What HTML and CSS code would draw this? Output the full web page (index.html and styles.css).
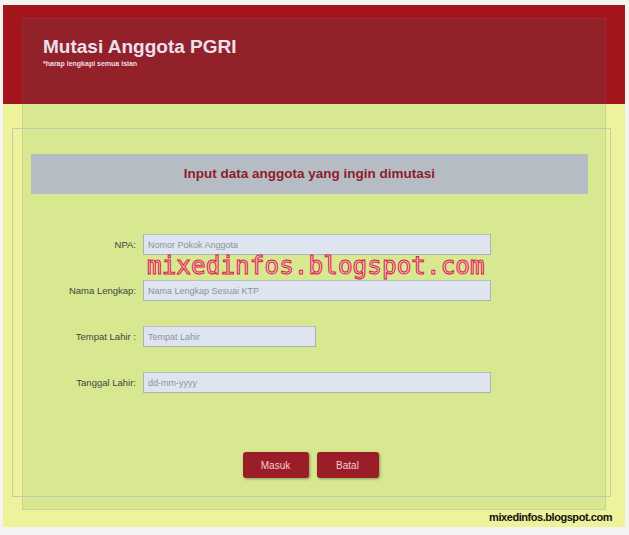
FILE: index.html
```html
<!DOCTYPE html>
<html lang="id">
<head>
  <meta charset="UTF-8">
  <meta name="viewport" content="width=device-width, initial-scale=1.0">
  <title>Mutasi Anggota PGRI</title>
  <link rel="stylesheet" href="styles.css">
</head>
<body>

<div class="frame">
  <div class="panel">
    <div class="panel-head">
      <h1>Mutasi Anggota PGRI</h1>
      <p>*harap lengkapi semua isian</p>
    </div>

    <div class="form-box">
      <div class="form-title">Input data anggota yang ingin dimutasi</div>

      <div class="form-grid">
        <label for="npa">NPA:</label>
        <input type="text" id="npa" placeholder="Nomor Pokok Anggota">

        <label for="nama">Nama Lengkap:</label>
        <input type="text" id="nama" placeholder="Nama Lengkap Sesuai KTP">

        <label for="tempat">Tempat Lahir :</label>
        <input type="text" id="tempat" class="short" placeholder="Tempat Lahir">

        <label for="tanggal">Tanggal Lahir:</label>
        <input type="text" id="tanggal" placeholder="dd-mm-yyyy">
      </div>

      <div class="watermark">mixedinfos.blogspot.com</div>

      <div class="actions">
        <button class="btn btn-masuk">Masuk</button>
        <button class="btn btn-batal">Batal</button>
      </div>
    </div>
  </div>
  <div class="credit">mixedinfos.blogspot.com</div>
</div>

</body>
</html>
```

FILE: styles.css
```css
body {
  font-family: "Liberation Sans", Arial, sans-serif;
  margin: 0;
  padding: 5px 0 0 3px;
  background-color: #f3f3f1;
}

.frame {
  width: 622px;
  height: 522px;
  box-sizing: border-box;
  padding: 13px 0 0 19px;
  background: linear-gradient(#a3161c 0, #a3161c 99px, #eef39b 99px);
  box-shadow: 0 1px 0 #dfe2c0;
}

.panel {
  width: 584px;
  height: 492px;
  box-sizing: border-box;
  background-color: #d8e890;
  border: 1px solid #c9d49a;
  border-top-color: #9c2a33;
}

.panel-head {
  height: 86px;
  box-sizing: border-box;
  margin: -1px -1px 0 -1px;
  padding: 17px 0 0 20px;
  background-color: #932129;
  border: 1px solid #9d2b34;
  border-bottom: none;
}

.panel-head h1 {
  margin: 0;
  font-size: 19px;
  line-height: 22px;
  color: #ebe0ee;
}

.panel-head p {
  margin: 2px 0 0 0;
  font-size: 7px;
  font-weight: bold;
  color: #eedce4;
}

.form-box {
  position: relative;
  height: 369px;
  box-sizing: border-box;
  margin: 24px -6px 0 -11px;
  padding: 25px 22px 0 18px;
  border: 1px solid #c2cab4;
}

.form-title {
  height: 40px;
  line-height: 40px;
  background-color: #b6bcc4;
  text-align: center;
  font-size: 13.5px;
  font-weight: bold;
  color: #8d1c2b;
}

.form-grid {
  display: grid;
  grid-template-columns: 105px 348px;
  grid-auto-rows: 21px;
  column-gap: 7px;
  row-gap: 25px;
  margin-top: 40px;
  align-items: center;
}

.form-grid label {
  text-align: right;
  font-size: 9.5px;
  color: #444;
}

.form-grid input {
  height: 21px;
  width: 348px;
  box-sizing: border-box;
  margin: 0;
  padding: 0 4px;
  font-family: "Liberation Sans", Arial, sans-serif;
  font-size: 9px;
  background-color: #dfe5ee;
  border: 1px solid #a9b3bd;
  border-top-color: #b6bec8;
  border-radius: 0;
}

.form-grid input.short {
  width: 173px;
}

.form-grid input::placeholder {
  color: #8b939c;
}

.watermark {
  position: absolute;
  left: 134px;
  top: 124px;
  font-family: "DejaVu Sans Mono", monospace;
  font-size: 24.4px;
  line-height: 26px;
  color: #f9c4d0;
  -webkit-text-stroke: 1px #d7223f;
}

.actions {
  display: flex;
  justify-content: center;
  gap: 8px;
  margin-top: 59px;
  padding-left: 2px;
}

.btn {
  height: 26px;
  border: none;
  border-radius: 3px;
  background-color: #9b1d27;
  color: #f1cfd7;
  font-family: "Liberation Sans", Arial, sans-serif;
  font-size: 10px;
  box-shadow: 1px 1px 3px rgba(0, 0, 0, 0.35);
  cursor: pointer;
}

.btn-masuk {
  width: 66px;
}

.btn-batal {
  width: 62px;
}

.credit {
  height: 14px;
  line-height: 14px;
  text-align: right;
  padding-right: 13px;
  font-size: 11px;
  font-weight: bold;
  letter-spacing: -0.45px;
  color: #111;
}
```
